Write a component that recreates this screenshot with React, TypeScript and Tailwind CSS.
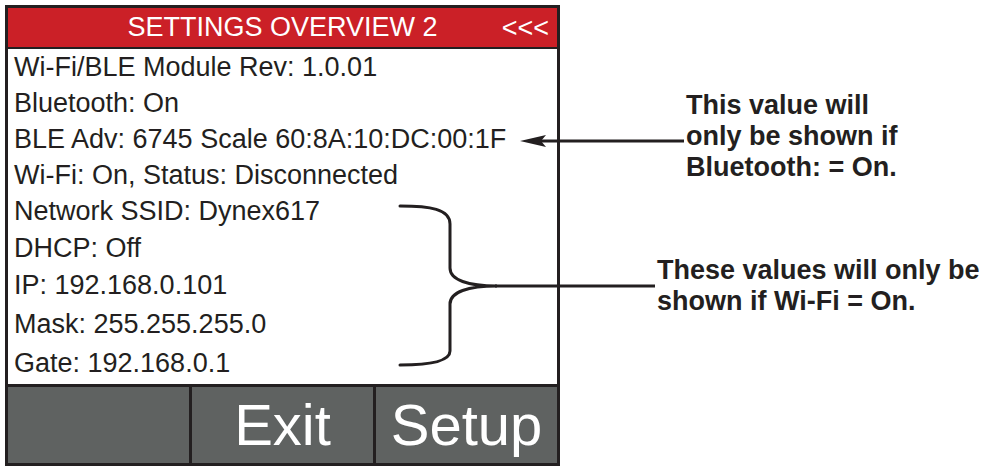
const rows: { label: string; h: string }[] = [
  { label: 'Wi-Fi/BLE Module Rev: 1.0.01', h: 'h-[37px]' },
  { label: 'Bluetooth: On', h: 'h-[35px]' },
  { label: 'BLE Adv: 6745 Scale 60:8A:10:DC:00:1F', h: 'h-[36px]' },
  { label: 'Wi-Fi: On, Status: Disconnected', h: 'h-[36px]' },
  { label: 'Network SSID: Dynex617', h: 'h-[37px]' },
  { label: 'DHCP: Off', h: 'h-[36px]' },
  { label: 'IP: 192.168.0.101', h: 'h-[38px]' },
  { label: 'Mask: 255.255.255.0', h: 'h-[40px]' },
  { label: 'Gate: 192.168.0.1', h: 'h-[38px]' },
];

function Device() {
  return (
    <div className="ml-[5px] mt-[5px] w-[555px] h-[461px] flex flex-col bg-[#231f20] p-[3px] gap-[2px]">
      {/* Title bar */}
      <div className="relative h-[39px] shrink-0 bg-[#cb2027] flex items-center justify-center text-white text-[27px] leading-none">
        <span>SETTINGS OVERVIEW 2</span>
        <span className="absolute right-[8px] top-1/2 -translate-y-1/2">&lt;&lt;&lt;</span>
      </div>

      {/* Values */}
      <div className="h-[335px] shrink-0 bg-white flex flex-col pl-[6px] text-[#231f20] text-[27px] leading-none">
        {rows.map((r) => (
          <div key={r.label} className={`${r.h} flex items-center whitespace-nowrap`}>
            {r.label}
          </div>
        ))}
      </div>

      {/* Soft keys */}
      <div className="flex-1 grid grid-cols-3 gap-[3px] mt-px">
        <div className="bg-[#5f6261]" />
        <div className="bg-[#5f6261] flex items-center justify-center text-white text-[58px] leading-none">Exit</div>
        <div className="bg-[#5f6261] flex items-center justify-center text-white text-[58px] leading-none">Setup</div>
      </div>
    </div>
  );
}

export default function App() {
  return (
    <div
      className="relative w-[986px] h-[466px] bg-white overflow-hidden flex"
      style={{ fontFamily: '"Liberation Sans", Arial, sans-serif' }}
    >
      <Device />

      <div className="flex flex-col pl-[97px] text-[#231f20] font-bold text-[27px] leading-[31px]">
        <div className="ml-[29px] mt-[90px] whitespace-nowrap">
          This value will
          <br />
          only be shown if
          <br />
          Bluetooth: = On.
        </div>
        <div className="mt-[72px] whitespace-nowrap">
          These values will only be
          <br />
          shown if Wi-Fi = On.
        </div>
      </div>

      {/* callout lines */}
      <svg className="absolute inset-0 pointer-events-none" width="986" height="466" viewBox="0 0 986 466">
        <path d="M538 141 H684" stroke="#231f20" strokeWidth="3" fill="none" />
        <polygon points="520,141 546,135 541,141 546,147" fill="#231f20" />
        <path
          d="M400 206 C430 206 450 209 450 224 V268 C450 280 468 286 497 286 C468 286 450 292 450 304 V351 C450 361 430 365 400 365"
          stroke="#231f20"
          strokeWidth="3"
          fill="none"
          strokeLinecap="round"
        />
        <path d="M495 286 H655" stroke="#231f20" strokeWidth="3" fill="none" />
      </svg>
    </div>
  );
}
